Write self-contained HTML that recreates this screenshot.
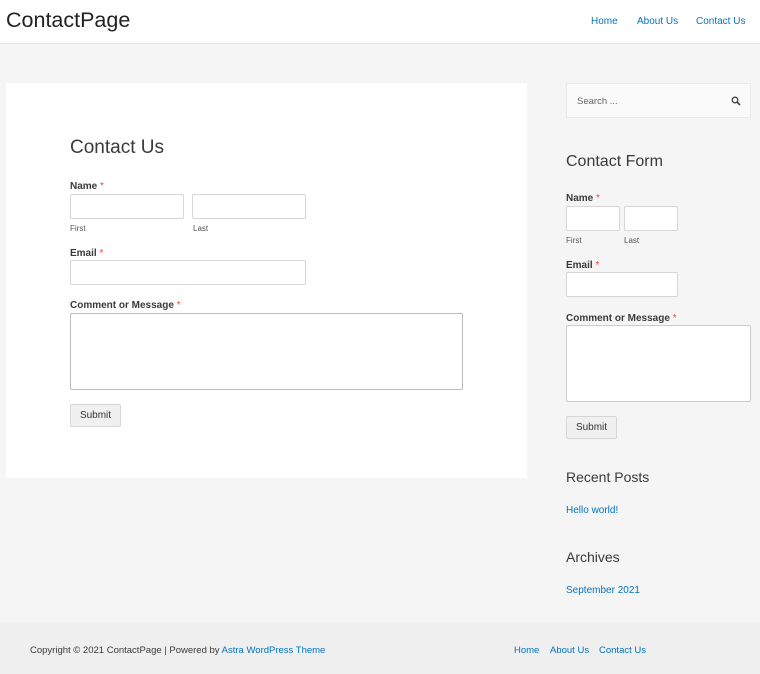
<!DOCTYPE html>
<html><head><style>
*{margin:0;padding:0;box-sizing:border-box}
body{width:760px;height:674px;background:#f5f5f5;font-family:"Liberation Sans",sans-serif;color:#3a3a3a;position:relative;overflow:hidden}
.a{position:absolute;white-space:nowrap}
.hdr{left:0;top:0;width:760px;height:44px;background:#fff;border-bottom:1px solid #e8e8e8}
a{color:#0274be;text-decoration:none}
.lbl{font-size:10px;font-weight:bold;color:#3a3a3a}
.lbl span{color:#e44;font-weight:normal}
.in{background:#fff;border:1px solid #d6d6d6;border-radius:2px}
.sm{font-size:8px;color:#555}
.btn{background:#f0f0f0;border:1px solid #d6d6d6;border-radius:2px;font-size:10px;color:#333;text-align:center}
.h{color:#3a3a3a;font-weight:normal}
</style></head><body>
<div class="a hdr"></div>
<div class="a" style="left:6px;top:8px;font-size:21.5px;color:#222">ContactPage</div>
<div class="a" style="left:591px;top:16px;font-size:10px"><a>Home</a></div>
<div class="a" style="left:637px;top:16px;font-size:10px"><a>About Us</a></div>
<div class="a" style="left:696px;top:16px;font-size:10px"><a>Contact Us</a></div>

<div class="a" style="left:6px;top:83px;width:521px;height:395px;background:#fff"></div>
<div class="a h" style="left:70px;top:137px;font-size:19px">Contact Us</div>
<div class="a lbl" style="left:70px;top:181px">Name <span>*</span></div>
<div class="a in" style="left:70px;top:194px;width:114px;height:25px"></div>
<div class="a in" style="left:192px;top:194px;width:114px;height:25px"></div>
<div class="a sm" style="left:70px;top:224px">First</div>
<div class="a sm" style="left:193px;top:224px">Last</div>
<div class="a lbl" style="left:70px;top:248px">Email <span>*</span></div>
<div class="a in" style="left:70px;top:260px;width:236px;height:25px"></div>
<div class="a lbl" style="left:70px;top:300px">Comment or Message <span>*</span></div>
<div class="a in" style="left:70px;top:313px;width:393px;height:77px;border-color:#bbb"></div>
<div class="a btn" style="left:70px;top:404px;width:51px;height:23px;line-height:22px">Submit</div>

<div class="a" style="left:566px;top:83px;width:185px;height:35px;background:#fafafa;border:1px solid #eaeaea"></div>
<div class="a" style="left:577px;top:96px;font-size:9.5px;color:#666">Search ...</div>
<svg class="a" style="left:731px;top:96px" width="10" height="10" viewBox="0 0 10 10"><circle cx="4" cy="4" r="2.8" fill="none" stroke="#444" stroke-width="1.3"/><path d="M6 6L9 9" stroke="#444" stroke-width="1.6"/></svg>
<div class="a h" style="left:566px;top:153px;font-size:16px">Contact Form</div>
<div class="a lbl" style="left:566px;top:193px">Name <span>*</span></div>
<div class="a in" style="left:566px;top:206px;width:54px;height:25px"></div>
<div class="a in" style="left:624px;top:206px;width:54px;height:25px"></div>
<div class="a sm" style="left:566px;top:236px">First</div>
<div class="a sm" style="left:624px;top:236px">Last</div>
<div class="a lbl" style="left:566px;top:260px">Email <span>*</span></div>
<div class="a in" style="left:566px;top:272px;width:112px;height:25px"></div>
<div class="a lbl" style="left:566px;top:313px">Comment or Message <span>*</span></div>
<div class="a in" style="left:566px;top:325px;width:185px;height:77px;border-color:#ccc"></div>
<div class="a btn" style="left:566px;top:416px;width:51px;height:23px;line-height:22px">Submit</div>
<div class="a h" style="left:566px;top:469px;font-size:14px">Recent Posts</div>
<div class="a" style="left:566px;top:505px;font-size:10px"><a>Hello world!</a></div>
<div class="a h" style="left:566px;top:549px;font-size:14px">Archives</div>
<div class="a" style="left:566px;top:585px;font-size:10px"><a>September 2021</a></div>

<div class="a" style="left:0;top:623px;width:760px;height:51px;background:#efefef"></div>
<div class="a" style="left:30px;top:645px;font-size:9.5px;color:#3a3a3a">Copyright © 2021 ContactPage | Powered by <a>Astra WordPress Theme</a></div>
<div class="a" style="left:514px;top:645px;font-size:9.5px"><a>Home</a></div>
<div class="a" style="left:550px;top:645px;font-size:9.5px"><a>About Us</a></div>
<div class="a" style="left:599px;top:645px;font-size:9.5px"><a>Contact Us</a></div>
</body></html>
